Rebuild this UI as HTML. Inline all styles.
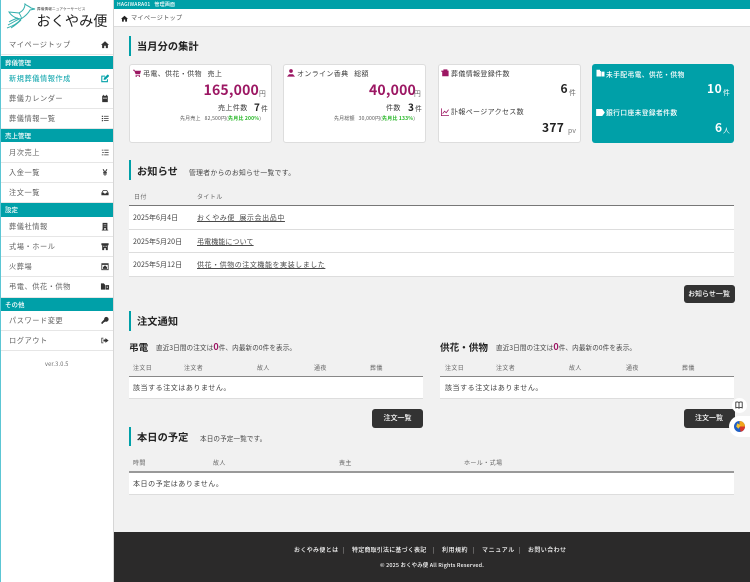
<!DOCTYPE html>
<html lang="ja"><head><meta charset="utf-8"><title>おくやみ便</title>
<style>
*{box-sizing:border-box;margin:0;padding:0}
html,body{width:750px;height:582px;overflow:hidden;background:#f1f1f1}
body{position:relative;font-family:"Noto Sans CJK JP","Liberation Sans",sans-serif;color:#3c3c3c}
.t{position:absolute;white-space:nowrap;line-height:12px;font-size:7px;letter-spacing:.35px}
.b{position:absolute}
.sb{position:absolute;left:1px;width:112px;height:13px;background:#00a0a8;color:#fff;font-size:6.5px;font-weight:500;line-height:13px;padding-left:4px}
.it{position:absolute;left:1px;width:112px;height:20px;border-bottom:1.5px solid #e6e6e6;background:#fff}
.it span{position:absolute;left:8px;top:4px;font-size:7.2px;line-height:13px;letter-spacing:.55px;color:#606060;white-space:nowrap}
.it svg{position:absolute;right:4px;top:5px;width:8px;height:9px;fill:#333}
.h{position:absolute;left:129px;width:2px;background:#00a0a8}
.ht{position:absolute;left:137px;font-size:10.2px;font-weight:700;line-height:14px;color:#222;white-space:nowrap;letter-spacing:.1px}
.card{position:absolute;top:63.5px;width:143px;height:79px;background:#fff;border:1px solid #ddd;border-radius:3px}
.pur{color:#9c1763;font-weight:700}
.btn{position:absolute;width:51px;height:18.5px;background:#333;color:#fff;border-radius:3px;font-size:7px;font-weight:500;text-align:center;line-height:18px}
.row{position:absolute;background:#fff;border-bottom:1px solid #ddd}
.th{color:#666;font-size:6px;letter-spacing:.4px}
a{color:#4a4a4a;text-decoration:underline}
</style></head><body>

<div class="b" style="left:0;top:0;width:114px;height:582px;background:#fff;border-right:1px solid #d6d6d6"></div>
<div class="b" style="left:0;top:0;width:1px;height:582px;background:#5cc6d4"></div>

<svg class="b" style="left:6px;top:3px" width="30" height="27" viewBox="0 0 30 27" fill="none" stroke="#35b0ae" stroke-width="1">
<path d="M3 9 L13 10 C15 13 16 15 15 16 C12 16 6 14 3 9Z"/><path d="M15 16 C18 14 22 11 24 7 L29 6 L25 5 C23 3 21 3 19 1 C19 5 17 8 13 10"/><path d="M15 16 C12 20 7 23 1 25 M13 16 C9 18 6 20 2 22 M12 15 C9 16 6 17 3 19 M15 17 C11 21 8 23 5 25"/>
</svg>
<div class="t" style="left:37px;top:7px;font-size:3.6px;line-height:6px;letter-spacing:.15px;color:#333">葬儀情報ニュアケーサービス</div>
<div class="t" style="left:36.5px;top:11px;font-size:14.2px;line-height:20px;letter-spacing:0;color:#222">おくやみ便</div>

<div class="it" style="top:35px"><span>マイページトップ</span><svg viewBox="0 0 10 10"><path d="M5 1 0 5.500h1.400V9.500h2.600V6.500h2V9.500h2.600V5.500H10z"/></svg></div>
<div class="sb" style="top:56px">葬儀管理</div>
<div class="it" style="top:69px"><span style="color:#00a0a8">新規葬儀情報作成</span><svg viewBox="0 0 10 10" style="fill:none;stroke:#00a0a8;stroke-width:1.300"><path d="M8 6v3H1V2h4"/><path d="M4 6 4.300 4.500 8.500 .8 9.500 1.800 5.400 5.800Z" fill="#00a0a8"/></svg></div>
<div class="it" style="top:89px"><span>葬儀カレンダー</span><svg viewBox="0 0 10 10"><path d="M1.500 1.500h1V.5h1v1h3V.5h1v1h1v8h-7zM2.500 4v1h5V4z"/></svg></div>
<div class="it" style="top:109px"><span>葬儀情報一覧</span><svg viewBox="0 0 10 10"><path d="M1 1.500h1.500v1.500H1zM3.500 1.700H9.500v1H3.500zM1 4.300h1.500v1.500H1zM3.500 4.500H9.500v1H3.500zM1 7h1.500v1.500H1zM3.500 7.200H9.500v1H3.500z"/></svg></div>
<div class="sb" style="top:129px">売上管理</div>
<div class="it" style="top:143px"><span>月次売上</span><svg viewBox="0 0 10 10"><path d="M1 1.500h2v1H1zM4 1.500H9.500v1H4zM1.500 4.500h2v1h-2zM4.500 4.500H9.500v1H4.500zM1 7.500h2v1H1zM4 7.500H9.500v1H4z"/></svg></div>
<div class="it" style="top:163px"><span>入金一覧</span><svg viewBox="0 0 10 10"><path d="M2 1h1.500L5 4 6.500 1H8L6.200 4.500H7.500v1H5.600v.8H7.500v1H5.600V9H4.400V7.300H2.500v-1h1.900v-.8H2.500v-1h1.300z"/></svg></div>
<div class="it" style="top:183px"><span>注文一覧</span><svg viewBox="0 0 10 10"><path d="M2.500 2h5l2 3.500V8.500H.5V5.500zM3 3 1.800 5.200H3.500l.5 1h2l.5-1h1.700L7 3z"/></svg></div>
<div class="sb" style="top:203px;height:14px">設定</div>
<div class="it" style="top:217px"><span>葬儀社情報</span><svg viewBox="0 0 10 10"><path d="M2 .5h6v8.500h1V10H1V9h1zM3.500 2v1h1V2zM5.500 2v1h1V2zM3.500 4v1h1V4zM5.500 4v1h1V4zM4 7v2h2V7z"/></svg></div>
<div class="it" style="top:237px"><span>式場・ホール</span><svg viewBox="0 0 10 10"><path d="M.5 1h9v2.500h-1V9.500H6V7H4v2.500H1.500V3.500h-1zM3 4v1.500h1.200V4zM5.800 4v1.500H7V4z"/></svg></div>
<div class="it" style="top:257px"><span>火葬場</span><svg viewBox="0 0 10 10"><path d="M.5 1h9v8.500H.5zM1.500 3v5.500h7V3zM5 3.500 7.500 6V8h-5V6z"/></svg></div>
<div class="it" style="top:277px;height:21px"><span>弔電、供花・供物</span><svg viewBox="0 0 10 10" style="width:10px;right:3px"><path d="M.5 1.500h3.500v1h1V8.500H.5zM5.500 3.500H9.500V8.500H5.500zM7 5v1.500h1V5z"/></svg></div>
<div class="sb" style="top:298px">その他</div>
<div class="it" style="top:311px"><span>パスワード変更</span><svg viewBox="0 0 10 10"><path d="M6.500.5a3 3 0 1 1-1.300 5.700L4.500 7H3.500V8H2.500V9H.5V7.300L3.900 3.800A3 3 0 0 1 6.500.5z"/></svg></div>
<div class="it" style="top:331px"><span>ログアウト</span><svg viewBox="0 0 10 10"><path d="M.5 1.500H3v1H1.500v5H3v1H.5zM5.500 2 9.500 5 5.500 8V6.200H3V3.800H5.500z"/></svg></div>
<div class="t" style="left:45px;top:358px;font-size:5.600px;color:#666;letter-spacing:.2px">ver.3.0.5</div>

<div class="b" style="left:114px;top:0;width:636px;height:9px;background:#00a0a8"></div>
<div class="t" style="left:117px;top:-1px;color:#fff;font-size:5px;font-weight:500;letter-spacing:.2px;line-height:11px">HAGIWARA01 &nbsp;&nbsp;管理画面</div>
<div class="b" style="left:114px;top:9px;width:636px;height:18px;background:#fff;border-bottom:1px solid #ddd"></div>
<svg class="b" style="left:121px;top:15px;fill:#222" width="7" height="7" viewBox="0 0 10 10"><path d="M5 1 0 5.500h1.400V9.500h2.600V6.500h2V9.500h2.600V5.500H10z"/></svg>
<div class="t" style="left:131px;top:13px;font-size:6.200px;color:#555;letter-spacing:.25px;line-height:10px">マイページトップ</div>

<div class="h" style="top:36px;height:20px"></div>
<div class="ht" style="top:39px">当月分の集計</div>

<div class="card" style="left:129px"></div>
<svg class="b" style="left:133px;top:69px;fill:#9c1763" width="8" height="8" viewBox="0 0 10 10"><path d="M0 1h2l.4 1.200H10L8.800 6.500H3.300L1.400 2H0zM3.200 7.500h5.500v.8H3.200z"/><circle cx="4" cy="9.200" r=".8"/><circle cx="8" cy="9.200" r=".8"/></svg>
<div class="t" style="left:143px;top:68px">弔電、供花・供物&nbsp;&nbsp;&nbsp;売上</div>
<div class="t pur" style="right:491px;top:81px;font-size:14px;line-height:18px;letter-spacing:.2px">165,000</div>
<div class="t" style="left:259px;top:87px;font-size:6.800px;color:#666;letter-spacing:0">円</div>
<div class="t" style="left:218px;top:102px;font-size:7px;letter-spacing:.4px">売上件数</div>
<div class="t" style="left:254px;top:100px;font-size:10px;font-weight:700;color:#222;line-height:14px;letter-spacing:0">7</div>
<div class="t" style="left:261px;top:102px;font-size:6.800px;letter-spacing:0">件</div>
<div class="t" style="left:180px;top:112.500px;font-size:5px;letter-spacing:.18px;color:#555">先月売上 &nbsp;&nbsp;82,500円(<b style="color:#22b522">先月比 200%</b>)</div>

<div class="card" style="left:282.500px"></div>
<svg class="b" style="left:287px;top:69px;fill:#9c1763" width="8" height="8" viewBox="0 0 10 10"><circle cx="5" cy="2.500" r="2.300"/><path d="M0 9.500 2.500 6.500h5L10 9.500z"/></svg>
<div class="t" style="left:297px;top:68px">オンライン香典&nbsp;&nbsp;&nbsp;総額</div>
<div class="t pur" style="right:334px;top:81px;font-size:14px;line-height:18px;letter-spacing:.2px">40,000</div>
<div class="t" style="left:414px;top:87px;font-size:6.800px;color:#666;letter-spacing:0">円</div>
<div class="t" style="left:386px;top:102px">件数</div>
<div class="t" style="left:408px;top:100px;font-size:10px;font-weight:700;color:#222;line-height:14px;letter-spacing:0">3</div>
<div class="t" style="left:415px;top:102px;font-size:6.800px;letter-spacing:0">件</div>
<div class="t" style="left:334px;top:112.500px;font-size:5px;letter-spacing:.18px;color:#555">先月総額 &nbsp;&nbsp;30,000円(<b style="color:#22b522">先月比 133%</b>)</div>

<div class="card" style="left:437.500px"></div>
<svg class="b" style="left:441px;top:69px;fill:#9c1763" width="8" height="8" viewBox="0 0 10 10"><path d="M3 .5h5v1.500h1.500V9H1.500V3.500H.3V2H3z"/></svg>
<div class="t" style="left:451px;top:68px">葬儀情報登録件数</div>
<div class="t" style="left:560.500px;top:81px;font-size:12px;font-weight:700;color:#222;line-height:16px;letter-spacing:0">6</div>
<div class="t" style="left:569px;top:86px;font-size:6.800px;letter-spacing:0;color:#666">件</div>
<svg class="b" style="left:441px;top:108px;fill:none;stroke:#9c1763;stroke-width:1" width="8" height="8" viewBox="0 0 10 10"><path d="M.5 .5V9.500H10M2 7 4.500 4 6.500 6 9.500 2"/></svg>
<div class="t" style="left:451px;top:106px">訃報ページアクセス数</div>
<div class="t" style="left:542px;top:120px;font-size:12px;font-weight:700;color:#222;line-height:16px;letter-spacing:.3px">377</div>
<div class="t" style="left:568px;top:124px;font-size:6.800px;color:#777;letter-spacing:.2px">pv</div>

<div class="b" style="left:592px;top:63.500px;width:142px;height:79px;background:#00a0a8;border-radius:3px"></div>
<svg class="b" style="left:596px;top:69px;fill:#fff" width="9" height="8" viewBox="0 0 10 9"><path d="M.5 .8h4v1.500h1V8.500H.5zM6 3H9.500V8.500H6z"/></svg>
<div class="t" style="left:606px;top:67.500px;color:#fff;font-weight:500;font-size:6.800px">未手配弔電、供花・供物</div>
<div class="t" style="left:707px;top:81px;color:#fff;font-size:12px;font-weight:700;line-height:16px;letter-spacing:.6px">10</div>
<div class="t" style="left:723px;top:86px;color:#fff;font-size:6.800px;letter-spacing:0">件</div>
<svg class="b" style="left:596px;top:109px;fill:#fff" width="9" height="7" viewBox="0 0 10 8"><path d="M0 0H7L10 4 7 8H0z"/></svg>
<div class="t" style="left:606px;top:106px;color:#fff;font-weight:500;font-size:6.800px">銀行口座未登録者件数</div>
<div class="t" style="left:715px;top:120px;color:#fff;font-size:12px;font-weight:700;line-height:16px">6</div>
<div class="t" style="left:723px;top:124px;color:#fff;font-size:6.800px;letter-spacing:0">人</div>

<div class="h" style="top:160px;height:20px"></div>
<div class="ht" style="top:164px">お知らせ</div>
<div class="t" style="left:189px;top:166px;font-size:6.800px;color:#444">管理者からのお知らせ一覧です。</div>
<div class="t th" style="left:134px;top:191px">日付</div>
<div class="t th" style="left:197px;top:191px">タイトル</div>
<div class="b" style="left:129px;top:205px;width:605px;height:1px;background:#777"></div>
<div class="row" style="left:129px;top:206px;width:605px;height:24px"></div>
<div class="row" style="left:129px;top:230px;width:605px;height:23px"></div>
<div class="row" style="left:129px;top:253px;width:605px;height:24px"></div>
<div class="t" style="left:133px;top:212px;letter-spacing:.1px">2025年6月4日</div><div class="t" style="left:197px;top:212px;letter-spacing:.6px"><a>おくやみ便&nbsp;&nbsp;展示会出品中</a></div>
<div class="t" style="left:133px;top:235.500px;letter-spacing:.1px">2025年5月20日</div><div class="t" style="left:197px;top:235.500px;letter-spacing:.1px"><a>弔電機能について</a></div>
<div class="t" style="left:133px;top:258.500px;letter-spacing:.1px">2025年5月12日</div><div class="t" style="left:197px;top:258.500px;letter-spacing:.55px"><a>供花・供物の注文機能を実装しました</a></div>
<div class="btn" style="left:683.500px;top:284.500px">お知らせ一覧</div>

<div class="h" style="top:311px;height:20px"></div>
<div class="ht" style="top:314px">注文通知</div>
<div class="t" style="left:129px;top:340px;font-size:9.600px;font-weight:700;line-height:14px;color:#222;letter-spacing:0">弔電</div>
<div class="t" style="left:156px;top:341px;font-size:6.600px;letter-spacing:.1px;color:#444">直近3日間の注文は<b class="pur" style="font-size:9px">0</b>件、内最新の0件を表示。</div>
<div class="t th" style="left:133px;top:362px">注文日</div><div class="t th" style="left:184px;top:362px">注文者</div><div class="t th" style="left:257px;top:362px">故人</div><div class="t th" style="left:314px;top:362px">通夜</div><div class="t th" style="left:370px;top:362px">葬儀</div>
<div class="b" style="left:129px;top:375.500px;width:294px;height:1.500px;background:#888"></div>
<div class="row" style="left:129px;top:377px;width:294px;height:22px"></div>
<div class="t" style="left:133px;top:382px;letter-spacing:.55px">該当する注文はありません。</div>
<div class="btn" style="left:372px;top:409px">注文一覧</div>

<div class="t" style="left:440px;top:340px;font-size:9.600px;font-weight:700;line-height:14px;color:#222;letter-spacing:0">供花・供物</div>
<div class="t" style="left:496px;top:341px;font-size:6.600px;letter-spacing:.1px;color:#444">直近3日間の注文は<b class="pur" style="font-size:9px">0</b>件、内最新の0件を表示。</div>
<div class="t th" style="left:445px;top:362px">注文日</div><div class="t th" style="left:496px;top:362px">注文者</div><div class="t th" style="left:569px;top:362px">故人</div><div class="t th" style="left:626px;top:362px">通夜</div><div class="t th" style="left:682px;top:362px">葬儀</div>
<div class="b" style="left:440px;top:375.500px;width:294px;height:1.500px;background:#888"></div>
<div class="row" style="left:440px;top:377px;width:294px;height:22px"></div>
<div class="t" style="left:445px;top:382px;letter-spacing:.55px">該当する注文はありません。</div>
<div class="btn" style="left:683.500px;top:409px">注文一覧</div>

<div class="b" style="left:732px;top:398px;width:15px;height:15px;border-radius:50%;background:#fff"></div>
<svg class="b" style="left:735px;top:401px;fill:none;stroke:#333;stroke-width:1.100" width="8" height="8" viewBox="0 0 10 10"><path d="M5 2C4 1 2 1 1 1.500V8.500C2 8 4 8 5 9 6 8 8 8 9 8.500V1.500C8 1 6 1 5 2V9"/></svg>
<div class="b" style="left:729px;top:416px;width:21px;height:21px;border-radius:11px 0 0 11px;background:#fff"></div>
<svg class="b" style="left:734px;top:421px" width="11" height="11" viewBox="0 0 10 10"><circle cx="5" cy="5" r="5" fill="#1f5fc4"/><path d="M5 0A5 5 0 0 1 10 5H5z" fill="#f2a51c"/><path d="M5 5H10A5 5 0 0 1 6 9.900z" fill="#d9362a"/><path d="M3 2 6 4 4 7 2 5z" fill="#f4c430"/></svg>

<div class="h" style="top:427px;height:19px"></div>
<div class="ht" style="top:430px">本日の予定</div>
<div class="t" style="left:200px;top:432px;font-size:6.600px;letter-spacing:.1px;color:#444">本日の予定一覧です。</div>
<div class="t th" style="left:133px;top:457px">時間</div><div class="t th" style="left:213px;top:457px">故人</div><div class="t th" style="left:339px;top:457px">喪主</div><div class="t th" style="left:464px;top:457px">ホール・式場</div>
<div class="b" style="left:129px;top:471px;width:605px;height:2px;background:#999"></div>
<div class="row" style="left:129px;top:473px;width:605px;height:22px"></div>
<div class="t" style="left:133px;top:478px;letter-spacing:.55px">本日の予定はありません。</div>

<div class="b" style="left:114px;top:532px;width:636px;height:50px;background:#2b2a2a"></div>
<div class="t" style="left:294px;top:544px;font-size:6px;font-weight:500;color:#fff;letter-spacing:.35px">おくやみ便とは</div>
<div class="t" style="left:343px;top:544px;font-size:6px;color:#bbb">|</div>
<div class="t" style="left:352px;top:544px;font-size:6px;font-weight:500;color:#fff;letter-spacing:.2px">特定商取引法に基づく表記</div>
<div class="t" style="left:433px;top:544px;font-size:6px;color:#bbb">|</div>
<div class="t" style="left:442px;top:544px;font-size:6px;font-weight:500;color:#fff;letter-spacing:.5px">利用規約</div>
<div class="t" style="left:473px;top:544px;font-size:6px;color:#bbb">|</div>
<div class="t" style="left:482px;top:544px;font-size:6px;font-weight:500;color:#fff;letter-spacing:.6px">マニュアル</div>
<div class="t" style="left:519px;top:544px;font-size:6px;color:#bbb">|</div>
<div class="t" style="left:528px;top:544px;font-size:6px;font-weight:500;color:#fff;letter-spacing:.4px">お問い合わせ</div>
<div class="t" style="left:380px;top:559px;font-size:5.400px;font-weight:500;color:#fff;letter-spacing:.18px">© 2025 おくやみ便 All Rights Reserved.</div>
</body></html>
